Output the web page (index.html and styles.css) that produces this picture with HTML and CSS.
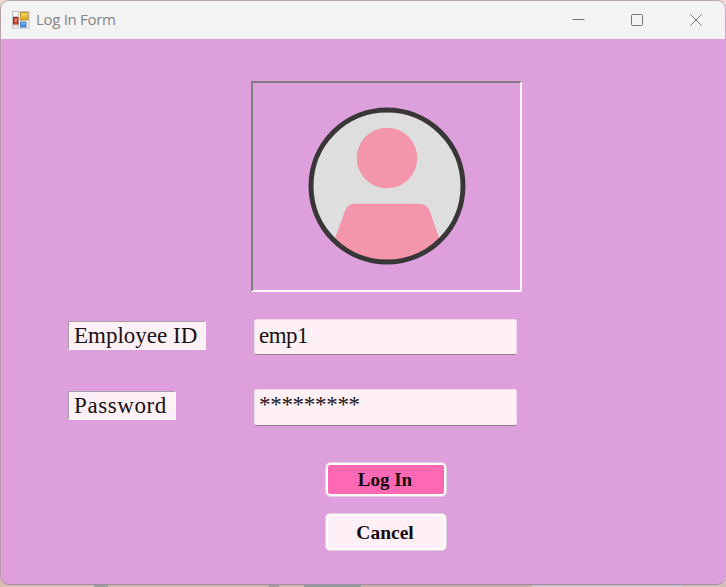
FILE: index.html
```html
<!DOCTYPE html>
<html lang="en">
<head>
<meta charset="utf-8">
<title>Log In Form</title>
<link rel="stylesheet" href="styles.css">
</head>
<body>
<main class="window">
  <header class="titlebar">
    <svg class="app-icon" width="18" height="18" viewBox="0 0 18 18">
      <defs>
        <linearGradient id="gold" x2="0" y2="1"><stop stop-color="#f8dc6c"/><stop offset="1" stop-color="#d9a216"/></linearGradient>
        <linearGradient id="blue" x2="0" y2="1"><stop stop-color="#8fc0fa"/><stop offset="1" stop-color="#2f77d3"/></linearGradient>
      </defs>
      <rect x=".5" y=".5" width="16.500" height="16.500" fill="#f5f5f5" stroke="#c4c4c4"/>
      <path d="M1 5.500h6M6.500 1v16M1 14.500h6" stroke="#c9c9c9" fill="none"/>
      <rect x="1.500" y="6.500" width="4.500" height="6.500" fill="#d34d3e" stroke="#a52a22"/>
      <rect x="3" y="8" width="1.500" height="2.500" fill="#eda096"/>
      <rect x="8.500" y="1.500" width="7.500" height="7.500" fill="url(#gold)" stroke="#bd922a"/>
      <rect x="8.500" y="11" width="5.500" height="5" fill="url(#blue)" stroke="#4b83c9"/>
    </svg>
    <span class="title">Log In Form</span>
    <div class="controls">
      <svg width="12" height="12" viewBox="0 0 12 12"><path d="M.5 5.500h12"/></svg>
      <svg width="12" height="12" viewBox="0 0 12 12"><rect x=".5" y=".5" width="11" height="11" rx="1"/></svg>
      <svg width="12" height="12" viewBox="0 0 12 12"><path d="M.3.3l11.400 11.400M11.700.3L.3 11.700"/></svg>
    </div>
  </header>
  <section class="form">
    <div class="picture">
      <svg width="158" height="158" viewBox="0 0 158 158">
        <defs><clipPath id="disc"><circle cx="79" cy="79" r="75"/></clipPath></defs>
        <circle cx="79" cy="79" r="75" fill="#dedede"/>
        <g clip-path="url(#disc)" fill="#f395ab">
          <circle cx="79" cy="51" r="30.300"/>
          <path d="M46 96.700H112Q119 96.700 122 104.500L125.500 115L136 145V158H22V145L33 115L36.500 105Q39.500 96.700 46 96.700Z"/>
        </g>
        <circle cx="79" cy="79" r="76" fill="none" stroke="#383637" stroke-width="5"/>
      </svg>
    </div>
    <div class="row">
      <span class="label label-id">Employee ID</span>
      <div class="field"><span class="value-id">emp1</span></div>
    </div>
    <div class="row">
      <span class="label label-password">Password</span>
      <div class="field field-password"><span>*********</span></div>
    </div>
    <div class="actions">
      <button class="button login">Log In</button>
      <button class="button cancel">Cancel</button>
    </div>
  </section>
</main>
</body>
</html>
```
FILE: styles.css
```css
* { box-sizing: border-box; }
body {
  margin: 0;
  width: 726px;
  height: 587px;
  overflow: hidden;
  background:
    linear-gradient(#efd8cf, #efd8cf) 0 0 / 100% 40px no-repeat,
    linear-gradient(90deg, #d7bdb2 0 94px, #9a9f99 94px 108px, #cdb6aa 108px 269px, #a89b98 269px 279px, #cdb6aa 279px 304px, #8f9e96 304px 361px, #c9aea6 361px 532px, #cdc5c7 532px 682px, #d2beb7 682px);
}
.window {
  width: 726px;
  height: 585px;
  border: 1px solid #b99fa9;
  border-top-color: #b5a7a3;
  border-right-color: #d3a3d0;
  border-bottom-color: #a68ba4;
  border-radius: 9px;
  overflow: hidden;
  background: #dda0dd;
}
.titlebar {
  display: flex;
  align-items: center;
  height: 38px;
  padding: 0 23px 0 11px;
  background: #f3f3f3;
}
.app-icon { margin-top: -1px; }
.title {
  margin: -2px 0 0 6px;
  font: 15px/20px "Open Sans", "Noto Sans", sans-serif;
  letter-spacing: -.3px;
  color: #868686;
}
.controls {
  display: flex;
  gap: 47px;
  margin-left: auto;
}
.controls svg { fill: none; stroke: #777; stroke-width: 1; overflow: visible; }
.form {
  font-family: "Liberation Serif", serif;
  font-size: 23px;
  color: #17121a;
}
.picture {
  display: flex;
  justify-content: center;
  align-items: center;
  width: 271px;
  height: 211px;
  margin: 42px 0 27px 250px;
  padding: 0 0 1px 1px;
  border: 2px solid;
  border-color: #827c85 #fcf6fc #fcf6fc #827c85;
}
.row {
  display: grid;
  grid-template-columns: 186px 263px;
  align-items: start;
  height: 70px;
  padding-left: 67px;
}
.label {
  justify-self: start;
  height: 29px;
  margin-top: 2px;
  padding-left: 5px;
  line-height: 28px;
  white-space: nowrap;
  background: #fff0f5;
  border: 1px solid;
  border-color: #aa9dac #fffafd #fffafd #aa9dac;
}
.label-id { width: 138px; }
.label-password { width: 108px; letter-spacing: .6px; }
.field {
  height: 36px;
  padding-left: 4px;
  line-height: 32px;
  background: #fff0f5;
  border: 1px solid #f1dce9;
  border-bottom-color: #8c818a;
  border-radius: 3px;
}
.value-id { letter-spacing: -.5px; }
.field-password {
  height: 37px;
  line-height: 30px;
  letter-spacing: -.3px;
}
.actions {
  display: flex;
  flex-direction: column;
  gap: 16px;
  margin: 3px 0 0 324px;
}
.button {
  width: 122px;
  padding: 1px 2px 0 0;
  font: bold 19px/28px "Liberation Serif", serif;
  color: #150910;
  border: 1px solid #e2cfdf;
  border-radius: 5px;
  box-shadow: inset 0 0 0 2px #fff;
}
.login { height: 35px; background: #ff69b4; }
.cancel { height: 38px; background: #fff0f5; font-size: 19.500px; }
```
